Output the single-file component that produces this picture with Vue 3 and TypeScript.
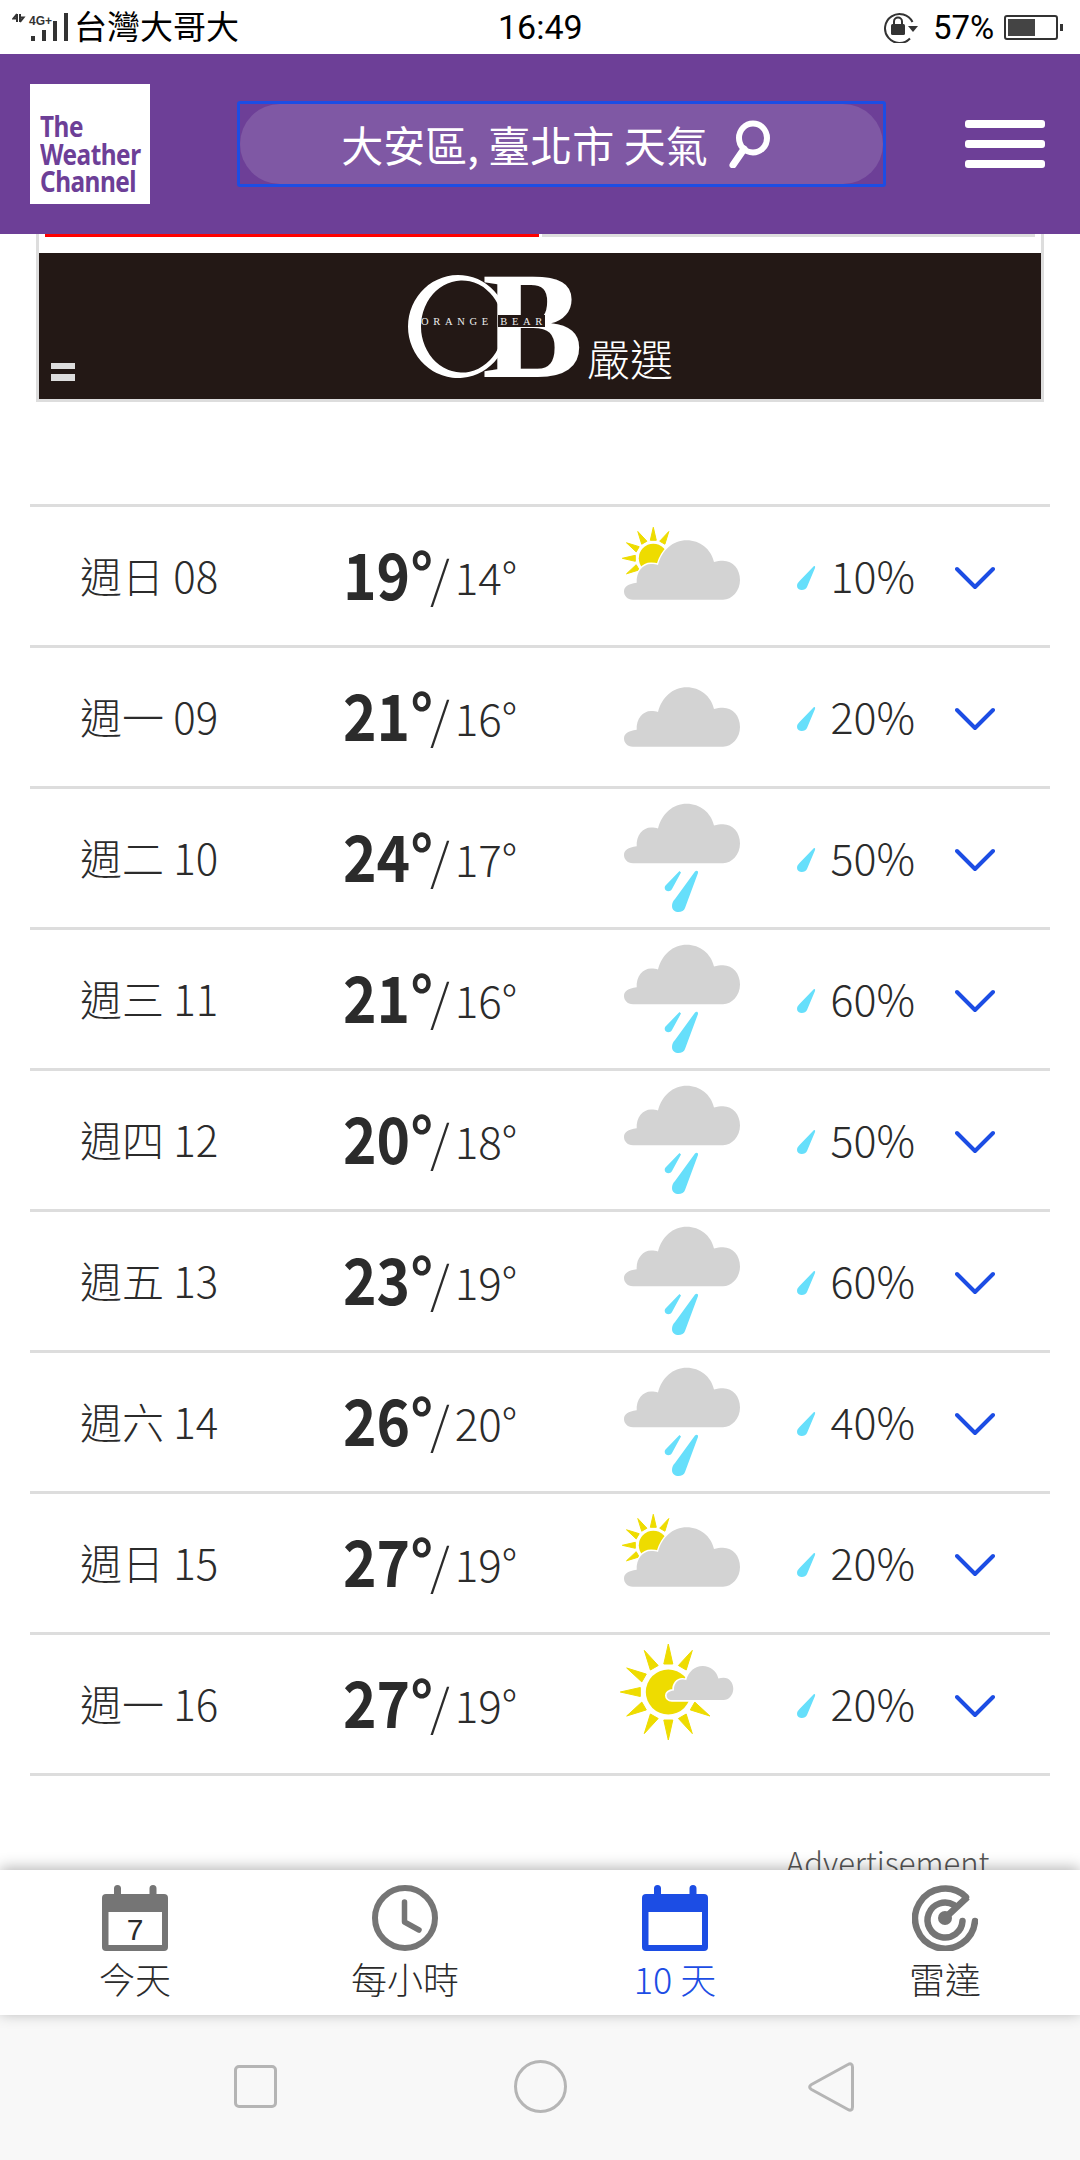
<script setup lang="ts">
type IconName = 'partly' | 'cloudy' | 'rain' | 'sunny'

interface DayRow {
  day: string
  high: number
  low: number
  icon: IconName
  rain: number
}

const days: DayRow[] = [
  { day: '週日 08', high: 19, low: 14, icon: 'partly', rain: 10 },
  { day: '週一 09', high: 21, low: 16, icon: 'cloudy', rain: 20 },
  { day: '週二 10', high: 24, low: 17, icon: 'rain', rain: 50 },
  { day: '週三 11', high: 21, low: 16, icon: 'rain', rain: 60 },
  { day: '週四 12', high: 20, low: 18, icon: 'rain', rain: 50 },
  { day: '週五 13', high: 23, low: 19, icon: 'rain', rain: 60 },
  { day: '週六 14', high: 26, low: 20, icon: 'rain', rain: 40 },
  { day: '週日 15', high: 27, low: 19, icon: 'partly', rain: 20 },
  { day: '週一 16', high: 27, low: 19, icon: 'sunny', rain: 20 },
]

const cloudPath =
  'M13 100.7C7 100.7 4 96.5 4 92.5C4 88 8 84.8 16.7 83.8C16 73 23 65 31 65C34 65 36 65.3 38 66C42 51 53 41.3 66.7 41.3C80 41.3 91 50 94 63C97 62 100 61.7 103 61.7C113 61.7 120 70 120 81C120 92 112 100.7 103 100.7Z'

// tapered sun rays around a centre, one polygon per angle
function rays(cx: number, cy: number, inner: number, outer: number, base: number, angles: number[]) {
  return angles.map((deg) => {
    const a = (deg * Math.PI) / 180
    const ux = Math.cos(a)
    const uy = Math.sin(a)
    const bx = cx + ux * inner
    const by = cy + uy * inner
    const tx = cx + ux * outer
    const ty = cy + uy * outer
    const p1 = `${(bx - uy * base).toFixed(1)},${(by + ux * base).toFixed(1)}`
    const p2 = `${(bx + uy * base).toFixed(1)},${(by - ux * base).toFixed(1)}`
    return `${p1} ${p2} ${tx.toFixed(1)},${ty.toFixed(1)}`
  })
}

const smallRays = rays(33.3, 53.3, 18, 31, 3, [150, 180, 210, 240, 270, 300])
const bigRays = rays(48.3, 59, 28, 48, 4.5, [0, 30, 60, 90, 120, 150, 180, 210, 240, 270, 300, 330])
</script>

<template>
  <div class="screen">
    <div class="status-bar">
      <svg class="signal" width="58" height="32" viewBox="12 11 58 32">
        <path d="M17 14v8M17 14l-3.500 4.500h3.500M20 22v-8M20 22l3.500-4.500h-3.500" fill="none" stroke="#333" stroke-width="2" />
        <text x="29" y="25" class="signal-text">4G+</text>
        <rect x="31" y="36" width="4" height="5" fill="#333" />
        <rect x="42" y="30" width="4" height="11" fill="#333" />
        <rect x="53" y="21" width="4" height="20" fill="#333" />
        <rect x="64" y="13" width="4" height="28" fill="#333" />
      </svg>
      <span class="carrier">台灣大哥大</span>
      <span class="time">16:49</span>
      <svg class="rotate-lock" width="38" height="32" viewBox="0 0 38 32">
        <path d="M27 27.500A14.500 14.500 0 1 1 29.500 11" fill="none" stroke="#333" stroke-width="2" />
        <path d="M25 15h10l-5 6z" fill="#333" />
        <rect x="8" y="13" width="14" height="11" rx="1.500" fill="#333" />
        <path d="M11 14v-3.500a4 4 0 0 1 8 0V14" fill="none" stroke="#333" stroke-width="2" />
      </svg>
      <span class="battery-pct">57%</span>
      <div class="battery">
        <div class="battery-fill"></div>
      </div>
      <div class="battery-tip"></div>
    </div>

    <header class="topbar">
      <div class="logo">
        <span>The</span>
        <span>Weather</span>
        <span>Channel</span>
      </div>
      <div class="search">
        <div class="search-pill">
          <span>大安區, 臺北市 天氣</span>
          <svg width="46" height="48" viewBox="0 0 46 48">
            <ellipse cx="25" cy="18" rx="14" ry="14.500" fill="none" stroke="#fff" stroke-width="6" />
            <path d="M16 29L5 45" stroke="#fff" stroke-width="7" stroke-linecap="round" />
          </svg>
        </div>
      </div>
      <div class="menu">
        <i></i>
        <i></i>
        <i></i>
      </div>
    </header>

    <main class="content">
      <section class="ad">
        <div class="progress">
          <div class="progress-on"></div>
          <div class="progress-off"></div>
        </div>
        <svg class="banner" width="1002" height="146" viewBox="39 253 1002 146">
          <rect x="39" y="253" width="1002" height="146" fill="#231815" />
          <path d="M498 295.600A50 51.500 0 1 0 498 357.400L498 348.500A41 46 0 1 1 498 304.500Z" fill="#fff" />
          <text x="482" y="377" class="ob-b">B</text>
          <rect x="498" y="315" width="47" height="12" fill="#231815" />
          <text x="421" y="325" class="ob-name">ORANGE BEAR</text>
          <text x="587" y="376" class="ob-cjk">嚴選</text>
          <rect x="51" y="363" width="24" height="6" fill="#ddd" />
          <rect x="51" y="374" width="24" height="7" fill="#ddd" />
        </svg>
      </section>

      <section class="days">
        <div v-for="row in days" :key="row.day" class="day-row">
          <div class="day-name">{{ row.day }}</div>
          <div class="temps">
            <span class="high">{{ row.high }}°</span>
            <span class="slash">/</span>
            <span class="low">{{ row.low }}°</span>
          </div>
          <svg class="weather" width="130" height="138" viewBox="0 2 130 138">
            <template v-if="row.icon === 'partly'">
              <circle cx="33.300" cy="53.300" r="14.500" fill="#eedc00" />
              <polygon v-for="pts in smallRays" :key="pts" :points="pts" fill="#eedc00" stroke="#eedc00" stroke-linejoin="round" />
              <path :d="cloudPath" transform="translate(0 -6)" fill="#d3d3d3" stroke="#fff" stroke-width="3" paint-order="stroke" />
            </template>
            <path v-else-if="row.icon === 'cloudy'" :d="cloudPath" fill="#d3d3d3" />
            <template v-else-if="row.icon === 'rain'">
              <path :d="cloudPath" transform="translate(0 -24.500)" fill="#d3d3d3" />
              <path d="M59.500 84L61 85.500L52 102C50.500 105 45.500 105 44.800 101.500C44.500 100 45 99 46 98Z" fill="#66dffb" />
              <path d="M75 84.500C76.500 83 78.500 84 78 86L65 121C63.500 126.500 52 127 52 119C52 116 53 114 55 112Z" fill="#66dffb" />
            </template>
            <template v-else>
              <circle cx="48.300" cy="59" r="22.500" fill="#eedc00" />
              <polygon v-for="pts in bigRays" :key="pts" :points="pts" fill="#eedc00" stroke="#eedc00" stroke-linejoin="round" />
              <path :d="cloudPath" transform="translate(44.400 9.300) scale(0.574)" fill="#d3d3d3" stroke="#fff" stroke-width="6" paint-order="stroke" />
            </template>
          </svg>
          <div class="rain">
            <svg width="20" height="27" viewBox="0 0 20 26">
              <path d="M17.500 1C18.800 0 19.500 1 19 2.500L11 21.500C9.500 25.500 1 25.500 1 20.500C1 18.500 2 17 3.500 15.500Z" fill="#66dffb" />
            </svg>
            <span>{{ row.rain }}%</span>
          </div>
          <svg class="chevron" width="40" height="24" viewBox="0 0 40 24">
            <path d="M2 3L20 21L38 3" fill="none" stroke="#1c4de4" stroke-width="4" stroke-linecap="round" stroke-linejoin="round" />
          </svg>
        </div>
      </section>

      <div class="ad-label">Advertisement</div>
    </main>

    <nav class="tabs">
      <div class="tab">
        <svg width="66" height="66" viewBox="0 0 66 66">
          <path d="M15.500 9V3.500M51 9V3.500" stroke="#757575" stroke-width="7" stroke-linecap="round" />
          <rect x="0" y="9" width="66" height="57" rx="4" fill="#757575" />
          <rect x="6.500" y="27" width="53.500" height="33" fill="#fff" />
          <text x="33" y="55" class="cal-day">7</text>
        </svg>
        <span>今天</span>
      </div>
      <div class="tab">
        <svg width="66" height="66" viewBox="0 0 66 66">
          <circle cx="33" cy="33" r="30" fill="none" stroke="#757575" stroke-width="6" />
          <path d="M32.500 17V37L47 45" fill="none" stroke="#757575" stroke-width="5.500" stroke-linecap="round" stroke-linejoin="round" />
        </svg>
        <span>每小時</span>
      </div>
      <div class="tab tab-active">
        <svg width="66" height="66" viewBox="0 0 66 66">
          <path d="M15.500 9V3.500M51 9V3.500" stroke="#1c4de4" stroke-width="7" stroke-linecap="round" />
          <rect x="0" y="9" width="66" height="57" rx="4" fill="#1c4de4" />
          <rect x="6.500" y="27" width="53.500" height="33" fill="#fff" />
        </svg>
        <span>10 天</span>
      </div>
      <div class="tab">
        <svg width="66" height="66" viewBox="0 0 66 66">
          <g fill="none" stroke="#757575" stroke-width="6.500" stroke-linecap="round">
            <path d="M63 36A30 30 0 1 1 54 12" />
            <path d="M50.500 36A17.500 17.500 0 1 1 42 20" />
            <path d="M33 33L55.500 12" stroke-linecap="butt" />
          </g>
          <circle cx="33" cy="33" r="7" fill="#757575" />
        </svg>
        <span>雷達</span>
      </div>
    </nav>

    <footer class="system-bar">
      <div class="sys-square"></div>
      <div class="sys-circle"></div>
      <svg width="46" height="52" viewBox="0 0 46 52">
        <path d="M40 3.500C42.500 2 44.500 3 44.500 6V46C44.500 49 42.500 50 40 48.500L3.500 28.500C1 27 1 25 3.500 23.500Z" fill="none" stroke="#b5b5b5" stroke-width="3" stroke-linejoin="round" />
      </svg>
    </footer>
  </div>
</template>

<style scoped>
.screen {
  width: 1080px;
  height: 2160px;
  display: flex;
  flex-direction: column;
  overflow: hidden;
  background: #fff;
  color: #2b2b2b;
  font-family: "Noto Sans CJK TC", "Noto Sans", sans-serif;
}

.status-bar {
  height: 54px;
  flex: none;
  display: flex;
  align-items: center;
  padding-left: 12px;
  color: #000;
}

.status-bar > * {
  flex: none;
}

.signal-text {
  font-family: "Liberation Sans", sans-serif;
  font-size: 12px;
  font-weight: 700;
  fill: #333;
}

.carrier {
  width: 165px;
  margin-left: 4px;
  padding-bottom: 5px;
  font-size: 33px;
  line-height: 48px;
  white-space: nowrap;
}

.time {
  margin-left: 259px;
  width: 86px;
  font-family: Roboto, sans-serif;
  font-size: 34px;
}

.rotate-lock {
  margin-left: 299px;
}

.battery-pct {
  margin-left: 12px;
  font-family: Roboto, sans-serif;
  font-size: 33px;
}

.battery {
  margin-left: 10px;
  width: 54px;
  height: 25px;
  box-sizing: border-box;
  border: 2px solid #333;
  border-radius: 3px;
  padding: 2px;
}

.battery-fill {
  width: 27px;
  height: 100%;
  background: #444;
}

.battery-tip {
  margin-left: 2px;
  width: 3px;
  height: 7px;
  background: #333;
}

.topbar {
  height: 180px;
  flex: none;
  display: flex;
  align-items: center;
  padding: 0 35px 0 30px;
  background: #6d3f97;
}

.logo {
  width: 120px;
  height: 120px;
  box-sizing: border-box;
  padding: 28px 0 0 10px;
  display: flex;
  flex-direction: column;
  background: #fff;
  color: #6d3f97;
  font-family: "Noto Sans", sans-serif;
  font-size: 29px;
  font-weight: 700;
  line-height: 27.500px;
  letter-spacing: -0.6px;
}

.logo span {
  transform: scaleX(0.84);
  transform-origin: left center;
  white-space: nowrap;
}

.search {
  width: 649px;
  height: 86px;
  margin-left: 87px;
  box-sizing: border-box;
  border: 3px solid #1c4de4;
  border-radius: 3px;
}

.search-pill {
  height: 100%;
  display: flex;
  align-items: center;
  justify-content: center;
  gap: 20px;
  padding-right: 8px;
  border-radius: 42px;
  background: #7f58a4;
  color: #fff;
  font-size: 42px;
  font-weight: 400;
}

.search-pill span {
  padding-bottom: 2px;
}

.menu {
  margin-left: auto;
  width: 80px;
  display: flex;
  flex-direction: column;
  gap: 12px;
}

.menu i {
  height: 8px;
  border-radius: 3px;
  background: #fff;
}

.content {
  flex: 1;
  min-height: 0;
  overflow: hidden;
}

.ad {
  margin: 0 36px;
  width: 1008px;
  box-sizing: border-box;
  border: 3px solid #ddd;
  border-top: none;
}

.progress {
  display: flex;
  gap: 3px;
  height: 3px;
  padding: 0 6px;
  margin-bottom: 16px;
}

.progress-on {
  width: 494px;
  background: #f00;
}

.progress-off {
  width: 493px;
  background: #ddd;
}

.banner {
  display: block;
}

.ob-b {
  font-family: "Liberation Serif", serif;
  font-size: 152px;
  font-weight: 700;
  fill: #fff;
}

.ob-name {
  font-family: "Liberation Serif", serif;
  font-size: 10.500px;
  letter-spacing: 4.700px;
  fill: #eee;
}

.ob-cjk {
  font-size: 43px;
  font-weight: 300;
  fill: #fff;
}

.days {
  margin: 102px 30px 0;
  border-bottom: 3px solid #ddd;
}

.day-row {
  height: 141px;
  box-sizing: border-box;
  border-top: 3px solid #ddd;
  display: grid;
  grid-template-columns: 315px 275px 130px 165px 80px;
  align-items: center;
}

.day-name {
  padding-left: 50px;
  padding-bottom: 4px;
  font-size: 42px;
  font-weight: 300;
}

.temps {
  display: flex;
  align-items: center;
  margin-left: -2px;
}

.high {
  width: 87px;
  margin-bottom: 9px;
  font-size: 64px;
  font-weight: 700;
  white-space: nowrap;
  transform: scaleX(0.89);
  transform-origin: left center;
}

.slash {
  font-size: 50px;
  font-weight: 300;
}

.low {
  margin-left: 5px;
  font-size: 44px;
  font-weight: 300;
}

.weather {
  display: block;
}

.rain {
  display: flex;
  align-items: center;
  justify-content: flex-end;
  gap: 14px;
  font-size: 43px;
  font-weight: 300;
}

.rain span {
  padding-bottom: 4px;
}

.rain svg {
  margin-top: 4px;
}

.chevron {
  justify-self: end;
  margin-top: 4px;
}

.ad-label {
  margin-top: 64px;
  padding-left: 786px;
  font-size: 31px;
  font-weight: 300;
  line-height: 44px;
  color: #555;
}

.tabs {
  position: relative;
  z-index: 1;
  height: 145px;
  flex: none;
  display: grid;
  grid-template-columns: repeat(4, 1fr);
  background: #fff;
  box-shadow: 0 -2px 14px rgba(0, 0, 0, 0.3);
}

.tab {
  display: flex;
  flex-direction: column;
  align-items: center;
  padding-top: 15px;
  font-size: 36px;
  font-weight: 300;
  line-height: 48px;
}

.tab svg {
  display: block;
  margin-bottom: 3px;
}

.tab-active {
  color: #1c4de4;
}

.cal-day {
  font-family: "Liberation Sans", sans-serif;
  font-size: 30px;
  text-anchor: middle;
  fill: #2b2b2b;
}

.system-bar {
  height: 145px;
  flex: none;
  display: flex;
  align-items: center;
  background: #f8f8f8;
  padding-left: 234px;
  padding-bottom: 2px;
  box-sizing: border-box;
}

.sys-square {
  width: 43px;
  height: 43px;
  box-sizing: border-box;
  border: 3px solid #b5b5b5;
  border-radius: 5px;
}

.sys-circle {
  margin-left: 237px;
  width: 53px;
  height: 53px;
  box-sizing: border-box;
  border: 3px solid #b5b5b5;
  border-radius: 50%;
}

.system-bar svg {
  margin-left: 241px;
}
</style>
